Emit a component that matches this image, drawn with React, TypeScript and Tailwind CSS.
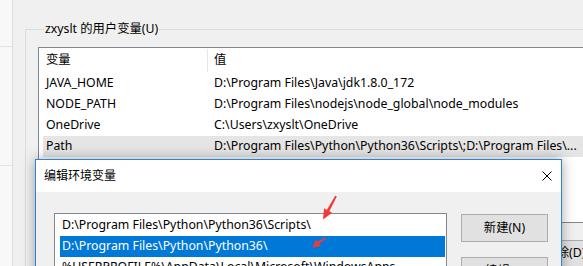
import React from "react";

const rows: [string, string][] = [
  ["JAVA_HOME", "D:\\Program Files\\Java\\jdk1.8.0_172"],
  ["NODE_PATH", "D:\\Program Files\\nodejs\\node_global\\node_modules"],
  ["OneDrive", "C:\\Users\\zxyslt\\OneDrive"],
  ["Path", "D:\\Program Files\\Python\\Python36\\Scripts\\;D:\\Program Files\\..."],
  ["TEMP", "%USERPROFILE%\\AppData\\Local\\Temp"],
  ["TMP", "%USERPROFILE%\\AppData\\Local\\Temp"],
];

const items = [
  "D:\\Program Files\\Python\\Python36\\Scripts\\",
  "D:\\Program Files\\Python\\Python36\\",
  "%USERPROFILE%\\AppData\\Local\\Microsoft\\WindowsApps",
];

export default function App() {
  return (
    <div className="relative w-[583px] h-[266px] overflow-hidden bg-[#f0f0f0] text-[12.3px] text-black font-['Noto_Sans','Noto_Sans_CJK_SC',sans-serif]">
      <div className="flex h-full w-[640px]">
        {/* left strip */}
        <div className="w-[13px] shrink-0 h-full bg-[#f8f8f8] border-r border-[#dedede] flex flex-col">
          <div className="h-[47px] border-b border-[#e3e3e3]" />
          <div className="h-[119px] border-b border-[#e3e3e3]" />
        </div>
        {/* main */}
        <div className="flex-1 pl-[12px] pt-[21px]">
          <fieldset className="border border-[#dcdcdc] border-r-0 pl-[12px] h-[300px]">
            <legend className="ml-[6px] px-[1px] leading-[16px]">zxyslt 的用户变量(U)</legend>
            <div className="mt-[10px] h-[176px] bg-white border border-[#828790] border-r-0">
              <div className="h-[25px] flex items-stretch">
                <div className="w-[168px] pl-[7px] flex items-center">变量</div>
                <div className="w-px bg-[#e5e5e5] my-[1px]" />
                <div className="pl-[6px] flex items-center">值</div>
              </div>
              {rows.map(([k, v], i) => (
                <div
                  key={k}
                  className={
                    "h-[21px] ml-[4px] flex items-center whitespace-nowrap " +
                    (i === 3 ? "bg-[#e5e5e5]" : "")
                  }
                >
                  <div className="w-[171px] pl-[3px] shrink-0">{k}</div>
                  <div>{v}</div>
                </div>
              ))}
            </div>
            <div className="mt-[17px] flex gap-[9px] pl-[389px]">
              <div className="w-[86px] h-[27px] shrink-0 border border-[#adadad] bg-[#e1e1e1] flex items-center justify-center">
                编辑(E)...
              </div>
              <div className="w-[86px] h-[27px] shrink-0 border border-[#adadad] bg-[#e1e1e1] flex items-center justify-center">
                删除(D)
              </div>
            </div>
          </fieldset>
        </div>
      </div>

      {/* Edit dialog */}
      <div className="absolute left-[35px] top-[159px] w-[527px] h-[150px] border border-[#2b85d4] bg-[#f0f0f0] shadow-[0_0_12px_rgba(0,0,0,0.35)] flex flex-col">
        <div className="h-[32px] bg-white flex items-center justify-between pl-[8px] pr-[9px] shrink-0">
          <span className="text-[12px]">编辑环境变量</span>
          <svg width="10" height="10" viewBox="0 0 10 10" className="mt-[-1px]">
            <path d="M0.5 0.5 L9.5 9.5 M9.5 0.5 L0.5 9.5" stroke="#000" strokeWidth="1" />
          </svg>
        </div>
        <div className="flex pl-[18px] pt-[21px]">
          <div className="w-[393px] h-[90px] bg-white border border-[#828790] pt-[1px]">
            {items.map((t, i) => (
              <div
                key={t}
                className={
                  "h-[21px] ml-[5px] mr-[1px] pl-[2px] flex items-center whitespace-nowrap " +
                  (i === 1 ? "bg-[#0078d7] text-white" : "")
                }
              >
                {t}
              </div>
            ))}
          </div>
          <div className="ml-[14px] mt-[1px] flex flex-col gap-[15px]">
            <div className="w-[87px] h-[28px] border border-[#adadad] bg-[#e1e1e1] flex items-center justify-center">
              新建(N)
            </div>
            <div className="w-[87px] h-[28px] border border-[#adadad] bg-[#e1e1e1] flex items-center justify-center">
              编辑(E)
            </div>
          </div>
        </div>
      </div>

      {/* red arrows */}
      <svg className="absolute inset-0 pointer-events-none" width="583" height="266" viewBox="0 0 583 266">
        <polygon
          points="336,196 336.8,196.5 329.4,211.2 332.2,212.8 323,219.5 324,208.2 326.8,210 335.2,195.8"
          fill="#f03a3a"
        />
        <polygon
          points="325.4,238 325.9,238.7 319.2,243.8 320.8,246 312.4,247.4 316,239.6 317.6,241.8 325,237.6"
          fill="#f03a3a"
        />
      </svg>
    </div>
  );
}
